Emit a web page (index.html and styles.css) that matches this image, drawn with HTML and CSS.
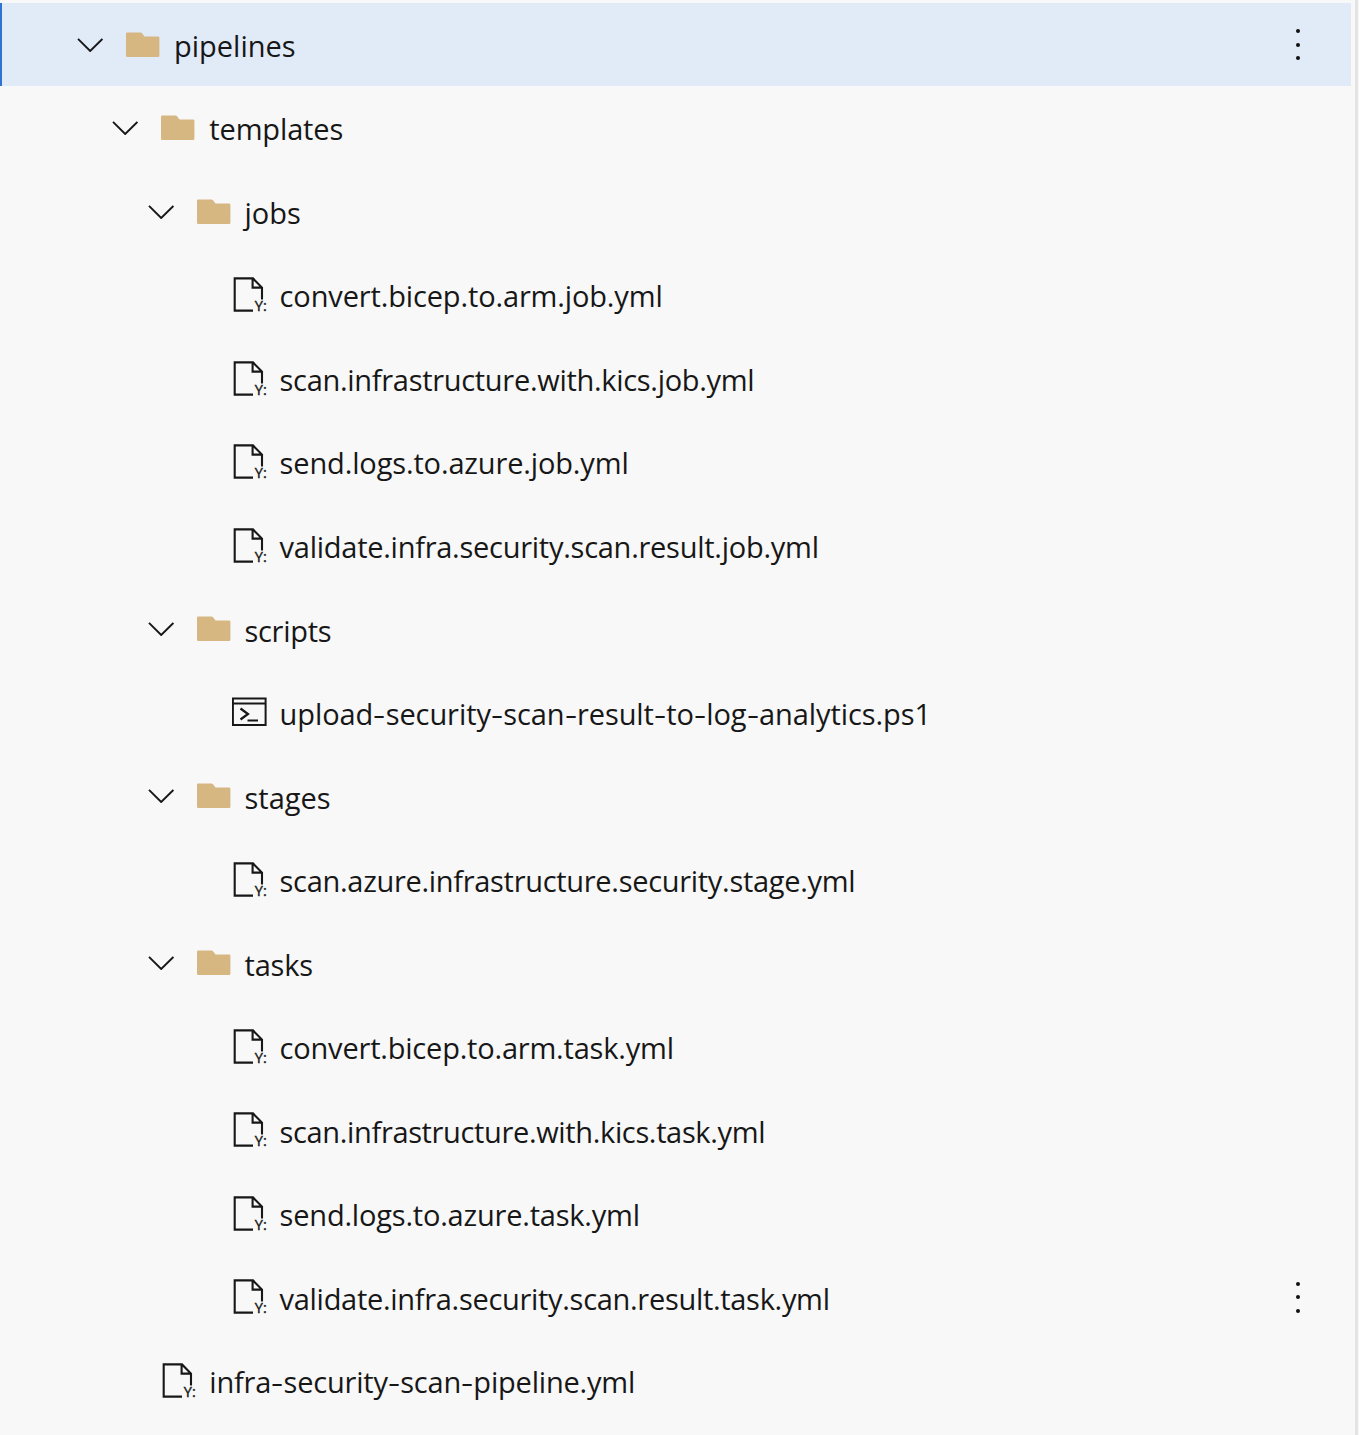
FILE: index.html
```html
<!DOCTYPE html>
<html lang="en">
<head>
<meta charset="utf-8">
<title>Repository files</title>
<link rel="stylesheet" href="styles.css">
</head>
<body>
<svg class="symbols" width="0" height="0" aria-hidden="true">
  <symbol id="chevron" viewBox="0 0 26 14"><path d="M1 .9 13.2 13 25.4.9" fill="none" stroke="#171717" stroke-width="1.9"/></symbol>
  <symbol id="folder" viewBox="0 0 34 26"><path d="M1.2.5H14.5q1 0 1.5.8L18.5 4.5H32.2q1.2 0 1.2 1.2V23.8q0 1.2-1.2 1.2H1.2Q0 25 0 23.8V1.7Q0 .5 1.2.5Z" fill="#d6b681"/></symbol>
  <symbol id="yml" viewBox="0 0 36 36"><path d="M21 33.6H2.7V1.4H21L30 10.6V22.5M20.6 1.4V10.6H30" fill="none" stroke="#171717" stroke-width="2.1"/><text x="22.8" y="33.6" font-size="14.5" fill="#171717" stroke="#171717" stroke-width=".4">Y:</text></symbol>
  <symbol id="shell" viewBox="0 0 36 36"><path d="M.9 3.6H33.6V30H.9ZM.9 8.4H33.6" fill="none" stroke="#171717" stroke-width="2"/><path d="M8.5 13.5 16 19 8.5 24.5M15.5 25.5H26" fill="none" stroke="#171717" stroke-width="2.2"/></symbol>
</svg>
<div class="panel">
<ul class="tree">
  <li class="row selected"><svg class="chevron"><use href="#chevron"/></svg><svg class="folder"><use href="#folder"/></svg><span class="name">pipelines</span><span class="more"><i></i><i></i><i></i></span></li>
  <li class="row level-1"><svg class="chevron"><use href="#chevron"/></svg><svg class="folder"><use href="#folder"/></svg><span class="name snug">templates</span></li>
  <li class="row level-2"><svg class="chevron"><use href="#chevron"/></svg><svg class="folder"><use href="#folder"/></svg><span class="name">jobs</span></li>
  <li class="row file level-3"><svg class="icon"><use href="#yml"/></svg><span class="name snug">convert.bicep.to.arm.job.yml</span></li>
  <li class="row file level-3"><svg class="icon"><use href="#yml"/></svg><span class="name tight">scan.infrastructure.with.kics.job.yml</span></li>
  <li class="row file level-3"><svg class="icon"><use href="#yml"/></svg><span class="name snug">send.logs.to.azure.job.yml</span></li>
  <li class="row file level-3"><svg class="icon"><use href="#yml"/></svg><span class="name close">validate.infra.security.scan.result.job.yml</span></li>
  <li class="row level-2"><svg class="chevron"><use href="#chevron"/></svg><svg class="folder"><use href="#folder"/></svg><span class="name tight">scripts</span></li>
  <li class="row file level-3"><svg class="icon"><use href="#shell"/></svg><span class="name slight">upload<b>-</b>security<b>-</b>scan<b>-</b>result<b>-</b>to<b>-</b>log<b>-</b>analytics.ps1</span></li>
  <li class="row level-2"><svg class="chevron"><use href="#chevron"/></svg><svg class="folder"><use href="#folder"/></svg><span class="name">stages</span></li>
  <li class="row file level-3"><svg class="icon"><use href="#yml"/></svg><span class="name tight">scan.azure.infrastructure.security.stage.yml</span></li>
  <li class="row level-2"><svg class="chevron"><use href="#chevron"/></svg><svg class="folder"><use href="#folder"/></svg><span class="name even">tasks</span></li>
  <li class="row file level-3"><svg class="icon"><use href="#yml"/></svg><span class="name even">convert.bicep.to.arm.task.yml</span></li>
  <li class="row file level-3"><svg class="icon"><use href="#yml"/></svg><span class="name tightest">scan.infrastructure.with.kics.task.yml</span></li>
  <li class="row file level-3"><svg class="icon"><use href="#yml"/></svg><span class="name even">send.logs.to.azure.task.yml</span></li>
  <li class="row file level-3"><svg class="icon"><use href="#yml"/></svg><span class="name tight">validate.infra.security.scan.result.task.yml</span><span class="more"><i></i><i></i><i></i></span></li>
  <li class="row file level-1"><svg class="icon"><use href="#yml"/></svg><span class="name even">infra<b>-</b>security<b>-</b>scan<b>-</b>pipeline.yml</span></li>
</ul>
</div>
</body>
</html>
```
FILE: styles.css
```css
* { box-sizing: border-box; }
body {
  margin: 0;
  background: #f8f8f8;
  color: #171717;
  font-family: "Open Sans", "Noto Sans", sans-serif;
}
.symbols { display: none; }
.panel {
  width: 1358px;
  height: 1435px;
  padding: 3px 4px 0 0;
  border-right: 3px solid #e4e4e4;
  overflow: hidden;
}
.tree { margin: 0; padding: 0; list-style: none; }
.row {
  --indent: 0px;
  display: flex;
  align-items: center;
  height: 83.53px;
  padding-left: calc(77px + var(--indent));
  padding-right: 51px;
}
.level-1 { --indent: 35.3px; }
.level-2 { --indent: 70.5px; }
.level-3 { --indent: 105.6px; }
.file { padding-left: calc(126px + var(--indent)); }
.selected {
  height: 83px;
  margin-bottom: .53px;
  background: #e1ebf7;
  box-shadow: inset 2px 0 #2f73d2;
}
.chevron { width: 26px; height: 14px; margin-right: 23px; flex: none; }
.folder { width: 34px; height: 26px; margin-right: 14px; flex: none; }
.icon { width: 36px; height: 36px; margin-right: 12px; flex: none; }
.name {
  font-size: 29px;
  line-height: 40px;
  white-space: nowrap;
  padding-top: 2.3px;
}
.name b {
  display: inline-block;
  width: 12.4px;
  font-weight: 400;
  transform: scaleX(1.3);
  transform-origin: left;
}
.slight { letter-spacing: -.08px; }
.snug { letter-spacing: -.14px; }
.even { letter-spacing: -.2px; }
.close { letter-spacing: -.26px; }
.tight { letter-spacing: -.3px; }
.tightest { letter-spacing: -.35px; }
.more {
  display: flex;
  flex-direction: column;
  gap: 9.2px;
  margin-left: auto;
}
.more i { width: 4px; height: 4px; border-radius: 50%; background: #111; }
```
